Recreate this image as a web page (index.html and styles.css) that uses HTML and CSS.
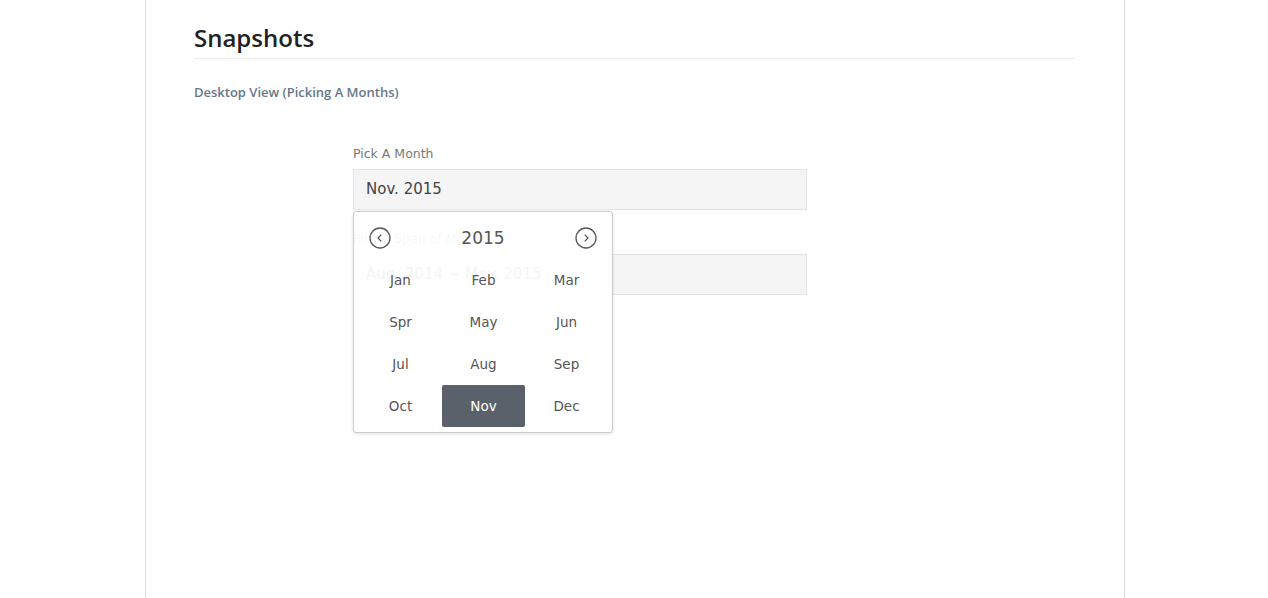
FILE: index.html
```html
<!doctype html>
<html lang="en">
<head>
    <meta charset="UTF-8">
    <title>Snapshots</title>
    <link rel="stylesheet" href="styles.css">
</head>
<body>
<div class="page">
    <h2 class="title">Snapshots</h2>
    <h5 class="sub">Desktop View (Picking A Months)</h5>

    <div class="demo">
        <div class="field">
            <label>Pick A Month</label>
            <div class="input">Nov. 2015</div>

            <!-- picker popup -->
            <div class="picker">
                <div class="picker-head">
                    <span class="arrow">
                        <svg width="22" height="22" viewBox="0 0 22 22"><circle cx="11" cy="11" r="10" fill="none" stroke="#555" stroke-width="1.3"/><path d="M12.3 7.6 L9 11 L12.3 14.4" fill="none" stroke="#555" stroke-width="1.3"/></svg>
                    </span>
                    <span class="year">2015</span>
                    <span class="arrow">
                        <svg width="22" height="22" viewBox="0 0 22 22"><circle cx="11" cy="11" r="10" fill="none" stroke="#555" stroke-width="1.3"/><path d="M9.7 7.6 L13 11 L9.7 14.4" fill="none" stroke="#555" stroke-width="1.3"/></svg>
                    </span>
                </div>
                <ul class="months">
                    <li>Jan</li><li>Feb</li><li>Mar</li>
                    <li>Spr</li><li>May</li><li>Jun</li>
                    <li>Jul</li><li>Aug</li><li>Sep</li>
                    <li>Oct</li><li class="active">Nov</li><li>Dec</li>
                </ul>
            </div>
        </div>
        <div class="field">
            <label>Pick A Span of Months</label>
            <div class="input">Aug. 2014 ~ May. 2015</div>
        </div>
    </div>
</div>
</body>
</html>
```

FILE: styles.css
```css
body{
    margin:0;
    background-color:#fff;
    font-family:"Open Sans","Noto Sans",sans-serif;
}

.page{
    width:881px;
    min-height:100vh;
    margin:0 0 0 145px;
    padding:0 49px 0 48px;
    border-left:1px solid #ddd;
    border-right:1px solid #ddd;
    box-sizing:content-box;
}

.title{
    margin:0;
    padding:21px 0 4px;
    font-size:24px;
    font-weight:600;
    color:#222;
    border-bottom:1px solid #eee;
    line-height:33px;
}
.sub{
    margin:24px 0 0;
    font-size:13px;
    font-weight:600;
    color:#66778a;
    line-height:18px;
}

.demo{
    width:454px;
    margin:43px 0 0 159px;
    font-family:"DejaVu Sans",sans-serif;
}
.field{
    position:relative;
    margin-bottom:19px;
}
.field label{
    display:block;
    font-size:12.5px;
    color:#777;
    line-height:20px;
    margin-bottom:5px;
}
.input{
    height:39px;
    line-height:39px;
    padding:0 12px;
    background-color:#f5f5f5;
    border:1px solid #e2e2e2;
    font-size:15px;
    color:#444;
}

.picker{
    position:absolute;
    left:0;
    top:67px;
    width:248px;
    padding:0 5px 5px;
    background-color:rgba(255,255,255,.94);
    border:1px solid #ccc;
    border-radius:3px;
    box-shadow:0 1px 3px rgba(0,0,0,.12);
    z-index:2;
}
.picker-head{
    display:flex;
    align-items:center;
    justify-content:space-between;
    box-sizing:border-box;
    height:47px;
    padding:4px 10px 0;
}
.arrow{
    display:flex;
}
.year{
    font-size:17px;
    color:#555;
}
.months{
    list-style:none;
    margin:0;
    padding:0;
    display:grid;
    grid-template-columns:repeat(3,83px);
    grid-auto-rows:42px;
}
.months li{
    display:flex;
    align-items:center;
    justify-content:center;
    font-size:13.5px;
    color:#555;
    border-radius:2px;
    cursor:pointer;
}
.months li.active{
    background-color:#5a616b;
    color:#fff;
}
```
